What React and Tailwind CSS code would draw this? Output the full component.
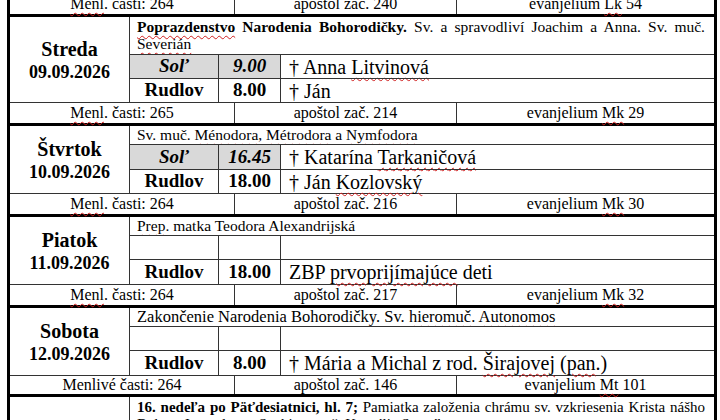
import React from "react";

const W = ({ children }) => (
  <span className="underline decoration-wavy decoration-[#d02020] decoration-1 underline-offset-[3px]">{children}</span>
);

const serif = { fontFamily: '"Liberation Serif", "Times New Roman", serif' };

function Readings({ a, b, c, h = "h-[21px]" }) {
  return (
    <div className={`flex ${h} border-t border-[#333] text-[16px] leading-none text-black`}>
      <div className="w-[225px] border-r border-[#333] flex items-center justify-center">{a}</div>
      <div className="w-[222px] border-r border-[#333] flex items-center justify-center">{b}</div>
      <div className="flex-1 flex items-center justify-center">{c}</div>
    </div>
  );
}

function MassRow({ place, time, text, gray, italic, h = "h-[24px]" }) {
  return (
    <div className={`flex ${h} border-t border-[#333] text-black`}>
      <div className={`w-[89px] border-r border-[#333] flex items-center justify-center text-[19px] font-bold ${gray ? "bg-[#d9d9d9]" : ""} ${italic ? "italic" : ""}`}>{place}</div>
      <div className={`w-[62px] border-r border-[#333] flex items-center justify-center text-[19px] font-bold ${gray ? "bg-[#d9d9d9]" : ""} ${italic ? "italic" : ""}`}>{time}</div>
      <div className="flex-1 flex items-center pl-[8px] text-[20px] whitespace-nowrap">{text}</div>
    </div>
  );
}

function Day({ name, date, feast, feastH = "h-[18px]", size = "text-[15.5px]", rows }) {
  return (
    <div className="flex border-t-[3px] border-black">
      <div className="w-[120px] border-r border-[#333] flex flex-col items-center justify-center font-bold text-black">
        {name && <div className="text-[20px] leading-[24px]">{name}</div>}
        {date && <div className="text-[18px] leading-[22px]">{date}</div>}
      </div>
      <div className="flex-1 flex flex-col">
        <div className={`${feastH} ${size} pl-[7px] pr-[9px] leading-[17px] text-black text-justify [text-align-last:left] overflow-hidden`}>{feast}</div>
        {rows}
      </div>
    </div>
  );
}

export default function App() {
  return (
    <div className="bg-white w-[720px] h-[420px] overflow-hidden" style={serif}>
      <div className="ml-[7px] w-[710px] -mt-[7px] border-x-[3px] border-black">
        <div className="flex h-[21px] text-[16px] leading-none text-black">
          <div className="w-[225px] border-r border-[#333] flex items-center justify-center"><span><W>Menl</W>. časti: 264</span></div>
          <div className="w-[222px] border-r border-[#333] flex items-center justify-center">apoštol zač. 240</div>
          <div className="flex-1 flex items-center justify-center"><span>evanjelium <W>Lk</W> 54</span></div>
        </div>

        <Day
          name="Streda"
          date="09.09.2026"
          feastH="h-[37px] pt-[1px]"
          feast={<><b><W>Poprazdenstvo</W> Narodenia Bohorodičky.</b> Sv. a spravodliví Joachim a Anna. Sv. muč. <W>Severián</W></>}
          rows={<>
            <MassRow place="Soľ" time="9.00" gray italic text={<span>† Anna <W>Litvinová</W></span>} />
            <MassRow place="Rudlov" time="8.00" text="† Ján" />
          </>}
        />
        <Readings a={<span><W>Menl</W>. časti: 265</span>} b="apoštol zač. 214" c={<span>evanjelium <W>Mk</W> 29</span>} />

        <Day
          name="Štvrtok"
          date="10.09.2026"
          feast={<>Sv. muč. <W>Ménodora</W>, <W>Métrodora</W> a <W>Nymfodora</W></>}
          rows={<>
            <MassRow place="Soľ" time="16.45" gray italic h="h-[25px]" text={<span>† Katarína <W>Tarkaničová</W></span>} />
            <MassRow place="Rudlov" time="18.00" text={<span>† Ján <W>Kozlovský</W></span>} />
          </>}
        />
        <Readings a={<span><W>Menl</W>. časti: 264</span>} b="apoštol zač. 216" c={<span>evanjelium <W>Mk</W> 30</span>} />

        <Day
          name="Piatok"
          date="11.09.2026"
          feast={<><W>Prep</W>. matka Teodora Alexandrijská</>}
          rows={<>
            <MassRow place="" time="" text="" />
            <MassRow place="Rudlov" time="18.00" h="h-[25px]" text={<span>ZBP <W>prvoprijímajúce</W> deti</span>} />
          </>}
        />
        <Readings a={<span><W>Menl</W>. časti: 264</span>} b="apoštol zač. 217" c={<span>evanjelium <W>Mk</W> 32</span>} />

        <Day
          name="Sobota"
          date="12.09.2026"
          size="text-[16.5px]"
          feast={<>Zakončenie Narodenia Bohorodičky. Sv. <W>hieromuč</W>. <W>Autonomos</W></>}
          rows={<>
            <MassRow place="" time="" text="" />
            <MassRow place="Rudlov" time="8.00" h="h-[25px]" text={<span>† Mária a Michal z rod. <W>Širajovej</W> (<W>pan</W>.)</span>} />
          </>}
        />
        <Readings h="h-[19px]" a="Menlivé časti: 264" b="apoštol zač. 146" c={<span>evanjelium <W>Mt</W> 101</span>} />

        <Day
          name=""
          date=""
          size="text-[15px]"
          feastH="h-[40px] pt-[2px]"
          feast={<><b>16. nedeľa po Päťdesiatnici, hl. 7;</b> Pamiatka založenia chrámu sv. vzkriesenia Krista nášho Boha v Jeruzaleme. Sv. hieromuč. Kornélia Stotníka</>}
          rows={null}
        />
      </div>
    </div>
  );
}
